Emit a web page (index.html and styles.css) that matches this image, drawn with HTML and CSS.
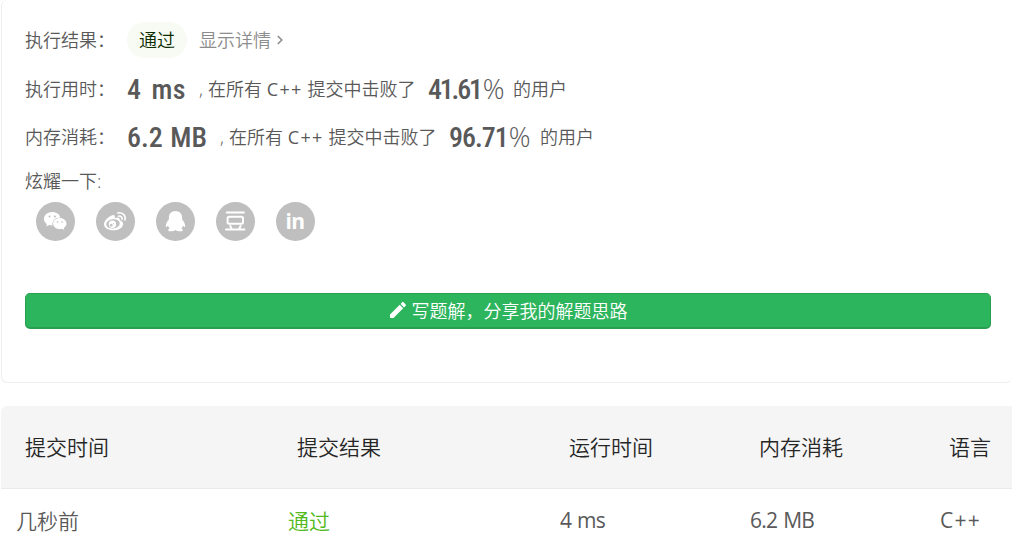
FILE: index.html
```html
<!DOCTYPE html>
<html lang="zh-CN">

<head>
    <meta charset="UTF-8" />
    <title>提交记录</title>
    <meta name="viewport" content="width=device-width, initial-scale=1.0" />
    <link rel="stylesheet" href="styles.css">
</head>

<body>

    <!-- Result summary -->
    <section class="result-card">
        <div class="result-row status-row">
            <span class="label">执行结果：</span>
            <span class="status">通过</span>
            <a class="detail-link">显示详情
                <svg class="chevron" viewBox="0 0 8 10"><path d="M1.8 1 L5.8 5 L1.8 9" /></svg>
            </a>
        </div>
        <div class="result-row">
            <span class="label">执行用时：</span>
            <span class="value time">4 ms</span>
            <span class="desc"><i>,</i>在所有 <em>C++</em> 提交中击败了</span>
            <span class="percent"><b>41.61</b>%</span>
            <span>的用户</span>
        </div>
        <div class="result-row">
            <span class="label">内存消耗：</span>
            <span class="value memory">6.2 MB</span>
            <span class="desc"><i>,</i>在所有 <em>C++</em> 提交中击败了</span>
            <span class="percent wide"><b>96.71</b>%</span>
            <span>的用户</span>
        </div>

        <div class="share-title">炫耀一下:</div>
        <div class="share-list">
            <a class="share-btn" title="微信">
                <svg viewBox="0 0 39 39">
                    <path class="fill" d="M16.2 10c-4.6 0-8.3 3-8.3 6.8 0 2.1 1.1 4 3 5.2l-.7 2.5 2.9-1.5c1 .3 2 .5 3.4.5-.9-4.6 3-8.1 7.8-8.1-.6-3.1-4-5.4-8.1-5.4z" />
                    <path class="fill" d="M23.8 16c-3.7 0-6.7 2.5-6.7 5.6s3 5.6 6.7 5.6c.8 0 1.6-.1 2.3-.4l2.2 1.3-.5-2.1c1.7-1.1 2.7-2.6 2.7-4.4 0-3.1-3-5.6-6.7-5.6z" />
                    <g class="hole">
                        <circle cx="13.5" cy="14.5" r="1" />
                        <circle cx="18.9" cy="14.5" r="1" />
                        <circle cx="21.5" cy="20" r=".8" />
                        <circle cx="26" cy="20" r=".8" />
                    </g>
                </svg>
            </a>
            <a class="share-btn" title="微博">
                <svg viewBox="0 0 39 39">
                    <path class="fill" d="M16.5 13.2c1.7-.6 2.8.3 2.2 2.8 2.7-1.1 5.7-.9 5 2.2 2.4.8 3.7 2.2 3.4 4.2-.6 3.5-5.1 5.9-9.9 5.9-5.1 0-9.2-2.3-9.2-6 0-3.8 4.9-8 8.5-9.1z" />
                    <ellipse class="hole" cx="17" cy="21.9" rx="6.8" ry="4.6" transform="rotate(-8 17 21.9)" />
                    <circle class="fill" cx="16.4" cy="22.3" r="3.7" />
                    <circle class="hole" cx="15.2" cy="23.2" r="1.3" />
                    <circle class="hole" cx="17.5" cy="21.8" r=".6" />
                    <path class="line thin" d="M21.8 10.9c4.5-1 8.4 2.6 7.2 7.2M22.5 14.2c2.3-.5 4.1 1.1 3.5 3.4" />
                </svg>
            </a>
            <a class="share-btn" title="QQ">
                <svg viewBox="0 0 39 39">
                    <path class="fill" d="M19.5 9c-4 0-6.6 2.8-6.6 6.7v1.5c-1.3 1.7-3.1 4.3-3.1 6.7 0 1.4.8 1.5 2.2-.5.3 1.2.9 2.2 1.7 3-1.9.7-2.2 2.6.4 2.8 2.2.2 4.3-.1 5.4-1.2 1.1 1.1 3.2 1.4 5.4 1.2 2.6-.2 2.3-2.1.4-2.8.8-.8 1.4-1.8 1.7-3 1.4 2 2.2 1.9 2.2.5 0-2.4-1.8-5-3.1-6.7v-1.5C26.1 11.8 23.5 9 19.5 9z" />
                </svg>
            </a>
            <a class="share-btn" title="豆瓣">
                <svg viewBox="0 0 39 39">
                    <path class="line" d="M10.7 10.4h17.2M10 27.6h18.4M14.3 24l1.4 3.2M24.5 24l-1.4 3.2" />
                    <rect class="line" x="11.6" y="14.8" width="15.4" height="7" rx="1.5" />
                </svg>
            </a>
            <a class="share-btn linkedin" title="LinkedIn">in</a>
        </div>

        <button class="write-btn">
            <svg class="pencil" viewBox="0 0 18 18">
                <path d="M1 13.5V17h3.5L14.2 7.3l-3.5-3.5L1 13.5zM16.7 4.8c.4-.4.4-1 0-1.4l-2.1-2.1c-.4-.4-1-.4-1.4 0l-1.6 1.6 3.5 3.5 1.6-1.6z" />
            </svg>
            写题解，分享我的解题思路
        </button>
    </section>

    <!-- Submission history -->
    <table class="history">
        <thead>
            <tr>
                <th class="col-date">提交时间</th>
                <th class="col-status">提交结果</th>
                <th class="col-time">运行时间</th>
                <th class="col-memory">内存消耗</th>
                <th>语言</th>
            </tr>
        </thead>
        <tbody>
            <tr>
                <td>几秒前</td>
                <td class="accepted">通过</td>
                <td class="number">4 ms</td>
                <td class="number">6.2 MB</td>
                <td class="lang">C++</td>
            </tr>
        </tbody>
    </table>

</body>

</html>
```
FILE: styles.css
```css
* {
    box-sizing: border-box;
}

body {
    margin: 0;
    padding-left: 1px;
    height: 552px;
    overflow: hidden;
    font-family: "Open Sans", "Noto Sans CJK SC", sans-serif;
    font-size: 18px;
    font-weight: 350;
    background: #fff;
    color: #595959;
}

.result-card {
    height: 383px;
    padding: 16px 20px 0 23px;
    border: 1px solid #eee;
    border-top: none;
    border-right: none;
    border-radius: 6px;
}

.result-row {
    display: flex;
    align-items: center;
    height: 48px;
    line-height: 48px;
    white-space: nowrap;
}

.status-row {
    height: 47px;
    margin-bottom: 2px;
}

.label {
    width: 102px;
}

.status {
    width: 60px;
    height: 36px;
    margin-right: 12px;
    border-radius: 18px;
    line-height: 36px;
    text-align: center;
    color: #0c2b00;
    background: #f8fbf4;
}

.detail-link {
    display: flex;
    align-items: center;
    color: #8c8c8c;
}

.chevron {
    width: 8px;
    height: 10px;
    margin-left: 5px;
    fill: none;
    stroke: #8c8c8c;
    stroke-width: 1.6;
}

.value,
.percent b {
    font-family: "Roboto Condensed", Roboto, sans-serif;
    font-size: 28px;
    font-weight: 550;
    font-stretch: 75%;
}

.value {
    width: 72px;
    padding-top: 1px;
    font-stretch: 88%;
}

.value.time {
    word-spacing: 3px;
    letter-spacing: 0.5px;
}

.value.memory {
    width: 93px;
    word-spacing: 1px;
}

.desc {
    width: 229px;
}

.desc i {
    display: inline-block;
    width: 9px;
    font-style: normal;
}

.desc em {
    font-style: normal;
    font-weight: 400;
    letter-spacing: 1.4px;
}

.percent {
    width: 85px;
    padding-top: 1px;
    font-size: 27px;
    font-weight: 300;
}

.percent.wide {
    width: 91px;
}

.percent b {
    letter-spacing: -2.2px;
    margin-right: 2px;
}

.percent.wide b {
    letter-spacing: -1px;
    margin-right: 1px;
}

.share-title {
    height: 41px;
    line-height: 41px;
}

.share-list {
    display: flex;
    gap: 21px;
    padding-left: 11px;
}

.share-btn {
    width: 39px;
    height: 39px;
    border-radius: 50%;
    background: #bfbfbf;
}

.share-btn svg {
    display: block;
}

.share-btn .fill {
    fill: #fff;
}

.share-btn .hole {
    fill: #bfbfbf;
}

.share-btn .line {
    fill: none;
    stroke: #fff;
    stroke-width: 2;
    stroke-linecap: round;
}

.share-btn .thin {
    stroke-width: 1.5;
}

.linkedin {
    font-size: 21px;
    font-weight: 700;
    line-height: 38px;
    text-align: center;
    text-indent: -1px;
    letter-spacing: -0.5px;
    color: #fff;
}

.write-btn {
    display: flex;
    align-items: center;
    justify-content: center;
    width: 966px;
    height: 36px;
    margin-top: 52px;
    padding: 0 0 1px;
    border: 1px solid #2a9f50;
    border-bottom-width: 2px;
    border-radius: 5px;
    font: inherit;
    color: #fff;
    background: #2db55d;
}

.pencil {
    width: 18px;
    height: 18px;
    margin-right: 5px;
    fill: #fff;
}

.history {
    width: 1011px;
    margin-top: 23px;
    border-collapse: separate;
    border-spacing: 0;
    table-layout: fixed;
    font-size: 21px;
    text-align: left;
}

.history th {
    height: 83px;
    padding: 0 0 2px 24px;
    border-bottom: 1px solid #eaeaea;
    font-weight: 350;
    color: #262626;
    background: #f5f5f5;
}

.history th:first-child {
    border-top-left-radius: 6px;
}

.history td {
    height: 66px;
    padding: 0 0 4px 15px;
}

.history .accepted {
    color: #52b91a;
}

.history .number {
    font-weight: 400;
    letter-spacing: -0.7px;
    word-spacing: 1px;
}

.history .lang {
    font-weight: 400;
    letter-spacing: 1.3px;
}

.col-date,
.col-status {
    width: 272px;
}

.col-time,
.col-memory {
    width: 190px;
}
```
